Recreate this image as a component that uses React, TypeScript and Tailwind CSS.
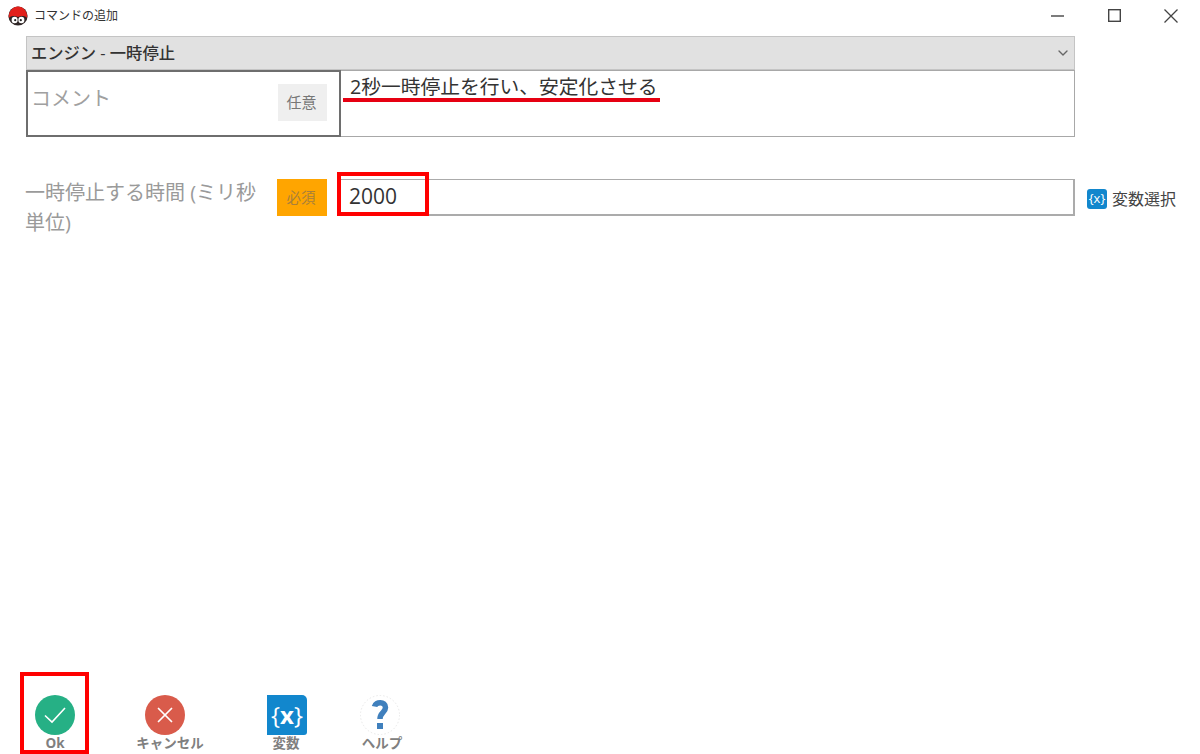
import { ChevronDown, X } from "lucide-react";

const font = "font-['Open_Sans','Noto_Sans_CJK_JP',sans-serif]";

const AppIcon = () => (
  <svg width="20" height="20" viewBox="0 0 20 20" className="shrink-0">
    <circle cx="10" cy="10" r="9.6" fill="#2f2626" />
    <path d="M0.8 12 C0.2 5 5 0.5 10 0.5 C15 0.5 19.8 5 19.2 12 C17 9.5 13 9.5 10 11 C7 9.5 3 9.5 0.8 12Z" fill="#e2211c" />
    <ellipse cx="6.6" cy="14" rx="3" ry="3.2" fill="#fff" />
    <ellipse cx="13.4" cy="14" rx="3" ry="3.2" fill="#fff" />
    <circle cx="7.2" cy="14.2" r="1.1" fill="#222" />
    <circle cx="12.8" cy="14.2" r="1.1" fill="#222" />
  </svg>
);

const VarIcon = ({ small }: { small?: boolean }) => (
  <div
    className={
      small
        ? "flex h-[20px] w-[20px] items-center justify-center rounded-[3px] bg-[#1287cd] text-[13px] text-white"
        : "flex h-[40px] w-[40px] items-center justify-center rounded-tr-[5px] rounded-br-[3px] bg-[#1287cd] text-[24px] text-white"
    }
  >
    <span className="font-normal">{"{"}</span>
    <span className={small ? "font-normal" : "font-bold"}>x</span>
    <span className="font-normal">{"}"}</span>
  </div>
);

const ToolButton = ({
  icon,
  label,
  className,
  labelClass,
}: {
  icon: React.ReactNode;
  label: string;
  className: string;
  labelClass?: string;
}) => (
  <div className={`flex flex-col items-center ${className}`}>
    <div className="flex h-[40px] items-center justify-center">{icon}</div>
    <span className={`text-[13.5px] leading-[16px] font-bold whitespace-nowrap text-[#808080] ${labelClass ?? ""}`}>
      {label}
    </span>
  </div>
);

export default function App() {
  return (
    <div className={`relative flex h-[754px] w-[1200px] flex-col overflow-hidden bg-white ${font}`}>
      {/* title bar */}
      <div className="flex h-[36px] shrink-0 items-center pb-[5px] pl-[8px]">
        <AppIcon />
        <span className="ml-[6px] text-[12px] text-[#333]">コマンドの追加</span>
        <div className="ml-auto flex items-center text-[#333]">
          <div className="flex w-[57px] justify-center">
            <svg width="13" height="13" viewBox="0 0 13 13" stroke="#444" strokeWidth="1.4">
              <path d="M0 7 H13" />
            </svg>
          </div>
          <div className="flex w-[57px] justify-center">
            <svg width="13" height="13" viewBox="0 0 13 13" fill="none" stroke="#444" strokeWidth="1.4">
              <rect x="0.7" y="0.7" width="11.6" height="11.6" />
            </svg>
          </div>
          <div className="flex w-[57px] justify-center pr-[1px]">
            <svg width="14" height="14" viewBox="0 0 14 14" fill="none" stroke="#444" strokeWidth="1.3">
              <path d="M0.5 0.5 L13.5 13.5 M13.5 0.5 L0.5 13.5" />
            </svg>
          </div>
        </div>
      </div>

      {/* form */}
      <div className="ml-[26px] w-[1049px]">
        <div className="flex h-[34px] items-center justify-between border border-[#c4c4c4] bg-[#e1e1e1] pr-[3px] pl-[4px]">
          <span className="text-[16.3px] font-medium text-[#333]">エンジン - 一時停止</span>
          <ChevronDown size={16} className="text-[#666]" />
        </div>
        <div className="flex h-[67px]">
          <div className="flex w-[315px] shrink-0 border-2 border-[#6e6e6e] pt-[13px] pr-[12px] pl-[3px]">
            <span className="text-[20px] leading-[27px] text-[#a0a0a0]">コメント</span>
            <div className="mt-[-1px] ml-auto flex h-[37px] w-[49px] items-center justify-center bg-[#efefef] pr-[2px] text-[15px] text-[#777]">
              任意
            </div>
          </div>
          <div className="flex-1 border border-l-0 border-[#a8a8a8] pl-[9px] text-[19.75px] leading-[32px] text-[#333]">
            2秒一時停止を行い、安定化させる
          </div>
        </div>

        <div className="mt-[42px] flex">
          <div className="mt-[-1px] ml-[-1px] w-[252px] shrink-0 pr-[14px] text-[20px] leading-[30px] text-[#9a9a9a]">
            一時停止する時間 (ミリ秒単位)
          </div>
          <div className="flex h-[37px] w-[50px] shrink-0 items-center justify-center bg-[#ffa500] pr-[2px] text-[14.5px] text-[#a9803a]">
            必須
          </div>
          <div className="ml-[13px] flex h-[37px] flex-1 items-center border-2 border-t-[1px] border-l-0 border-[#ababab] pl-[9px] text-[21px] text-[#333]">
            2000
          </div>
        </div>
      </div>

      {/* variable select, sits outside the form column */}
      <div className="absolute top-[187px] left-[1087px] flex items-center gap-[5px]">
        <VarIcon small />
        <span className="text-[16px] text-[#444]">変数選択</span>
      </div>

      {/* toolbar */}
      <div className="mt-auto flex h-[59px] items-start">
        <ToolButton
          className="ml-[25px] w-[60px]"
          label="Ok"
          icon={
            <div className="flex h-[40px] w-[40px] items-center justify-center rounded-full bg-[#26b085]">
              <svg width="26" height="26" viewBox="0 0 26 26" fill="none" stroke="#fff" strokeWidth="1.6">
                <path d="M3 13.5 L10 20 L23 6" />
              </svg>
            </div>
          }
        />
        <ToolButton
          className="ml-[40px] w-[80px]"
          label="キャンセル"
          labelClass="ml-[10px]"
          icon={
            <div className="flex h-[40px] w-[40px] items-center justify-center rounded-full bg-[#d95b4b]">
              <X size={26} strokeWidth={1.6} className="text-white" />
            </div>
          }
        />
        <ToolButton className="ml-[42px] w-[80px]" label="変数" labelClass="ml-[-2px]" icon={<VarIcon />} />
        <ToolButton
          className="ml-[13px] w-[80px]"
          label="ヘルプ"
          labelClass="ml-[4px]"
          icon={
            <svg width="40" height="40" viewBox="0 0 40 40" fill="none">
              <circle cx="20" cy="20" r="19.5" stroke="#e8e8e8" strokeDasharray="1.5 2" />
              <path d="M14.5 11.5 C15.5 6.5 25.5 6 25.5 12.5 C25.5 17.5 20 17.5 20 24" stroke="#4080bd" strokeWidth="5.5" />
              <rect x="17" y="28" width="6" height="6" fill="#4080bd" />
            </svg>
          }
        />
      </div>

      {/* red annotations */}
      <div className="absolute top-[98px] left-[343px] h-[4px] w-[317px] bg-[#e60012]" />
      <div className="absolute top-[172px] left-[337px] h-[44px] w-[92px] border-[4px] border-[#ff0000]" />
      <div className="absolute top-[672px] left-[20px] h-[82px] w-[69px] border-[4px] border-[#ff0000]" />
    </div>
  );
}
